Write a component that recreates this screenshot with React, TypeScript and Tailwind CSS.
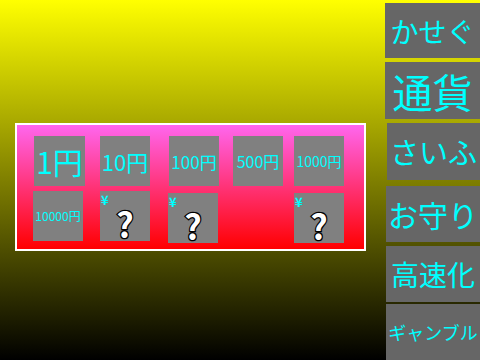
const font = "font-['Noto_Sans_CJK_JP','Noto_Sans',sans-serif]";

function Coin({ label, size, className }: { label: string; size: string; className: string }) {
  return (
    <div className={`flex items-center justify-center bg-[#808080] text-[#00ffff] leading-none whitespace-nowrap ${size} ${className}`}>
      {label}
    </div>
  );
}

function Mystery({ className }: { className: string }) {
  return (
    <div className={`relative flex h-[50px] w-[50px] flex-col bg-[#808080] ${className}`}>
      <span className="ml-[1px] mt-[2px] text-[13px] font-bold leading-none text-[#00ffff]">¥</span>
      <span className="mt-[1px] flex justify-center text-[34px] font-bold leading-none text-white [-webkit-text-stroke:2.5px_black] [paint-order:stroke_fill]">
        ?
      </span>
    </div>
  );
}

const buttons = [
  { label: 'かせぐ', cls: 'mt-[3px] h-[55px] text-[28px]' },
  { label: '通貨', cls: 'mt-[4px] h-[57px] text-[40px]' },
  { label: 'さいふ', cls: 'mt-[4px] h-[57px] ml-[2px] text-[29px]' },
  { label: 'お守り', cls: 'mt-[6px] h-[56px] ml-[1px] text-[30px]' },
  { label: '高速化', cls: 'mt-[4px] h-[56px] ml-[1px] text-[28px]' },
  { label: 'ギャンブル', cls: 'mt-[2px] h-[56px] ml-[1px] text-[18px]' },
];

export default function App() {
  return (
    <div className={`flex h-[360px] w-[480px] overflow-hidden bg-[linear-gradient(to_bottom,#ffff00,#000000)] ${font}`}>
      <div className="w-[385px] pl-[15px] pt-[123px]">
        <div className="h-[128px] w-[351px] border-2 border-white bg-[linear-gradient(to_bottom,#ff66ee,#ff0000)] pt-[11px]">
          <div className="flex h-[50px]">
            <Coin label="1円" size="text-[30px]" className="ml-[17px] w-[51px] h-[50px]" />
            <Coin label="10円" size="text-[22px]" className="ml-[15px] w-[50px] h-[50px]" />
            <Coin label="100円" size="text-[17px]" className="ml-[19px] w-[50px] h-[50px]" />
            <Coin label="500円" size="text-[16px]" className="ml-[14px] w-[50px] h-[50px]" />
            <Coin label="1000円" size="text-[14px]" className="ml-[11px] w-[50px] h-[50px]" />
          </div>
          <div className="mt-[5px] flex items-start">
            <Coin label="10000円" size="text-[12px]" className="ml-[16px] w-[50px] h-[50px]" />
            <Mystery className="ml-[17px]" />
            <Mystery className="ml-[18px] mt-[2px]" />
            <Mystery className="ml-[76px] mt-[2px]" />
          </div>
        </div>
      </div>
      <div className="flex w-[95px] flex-col">
        {buttons.map((b) => (
          <div
            key={b.label}
            className={`flex shrink-0 items-center justify-center bg-[#666666] leading-none text-[#00ffff] whitespace-nowrap ${b.cls}`}
          >
            {b.label}
          </div>
        ))}
      </div>
    </div>
  );
}
